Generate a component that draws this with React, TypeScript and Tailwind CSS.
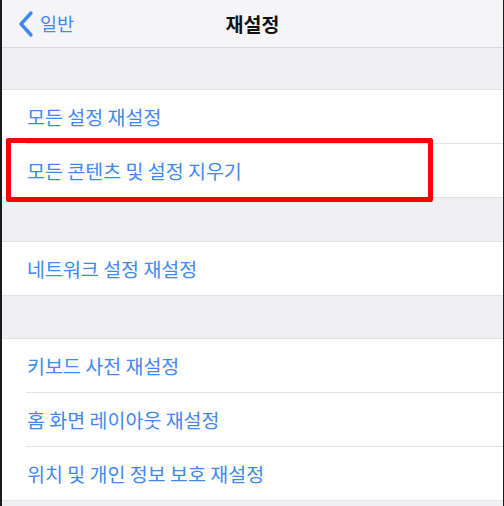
import { Fragment } from 'react';

const groups: string[][] = [
  ['모든 설정 재설정', '모든 콘텐츠 및 설정 지우기'],
  ['네트워크 설정 재설정'],
  ['키보드 사전 재설정', '홈 화면 레이아웃 재설정', '위치 및 개인 정보 보호 재설정'],
];

const gaps = ['h-[41px]', 'h-[43px]', 'h-[42px]'];

function Row({ label }: { label: string }) {
  return (
    <div className="h-[53px] flex items-center pl-[25px] text-[19.5px] text-[#3f88f0] leading-none">
      {label}
    </div>
  );
}

export default function App() {
  return (
    <div
      className="w-[504px] h-[506px] overflow-hidden bg-[#1a1a1a] pl-[2px] pr-[1px]"
      style={{ fontFamily: '"Noto Sans CJK KR", "Noto Sans", sans-serif' }}
    >
      <div className="relative h-full bg-[#efeff4] flex flex-col">
        <div className="h-[48px] shrink-0 bg-[#f5f5f7] border-b border-[#d8d8dc] flex items-center relative">
          <div className="flex items-center pl-[15px] gap-[5px] text-[#3f88f0]">
            <svg width="18" height="28" viewBox="0 0 18 28" fill="none">
              <path
                d="M14 3 L4 14 L14 25"
                stroke="#3f88f0"
                strokeWidth="3.4"
                strokeLinecap="round"
                strokeLinejoin="round"
              />
            </svg>
            <span className="text-[18.5px] leading-none">일반</span>
          </div>
          <div className="absolute inset-0 flex items-center justify-center pointer-events-none">
            <span className="text-[19.5px] font-semibold text-[#111] leading-none">재설정</span>
          </div>
        </div>

        {groups.map((rows, gi) => (
          <Fragment key={gi}>
            <div className={`${gaps[gi]} shrink-0`} />
            <div className="bg-white border-y border-[#e2e2e6]">
              {rows.map((label, ri) => (
                <Fragment key={label}>
                  {ri > 0 && <div className="h-px bg-[#e2e2e6] ml-[24px]" />}
                  <Row label={label} />
                </Fragment>
              ))}
            </div>
          </Fragment>
        ))}

        <div className="absolute left-[4px] top-[138px] w-[427px] h-[64px] border-[5px] border-[#ff0000] rounded-[2px]" />
      </div>
    </div>
  );
}
